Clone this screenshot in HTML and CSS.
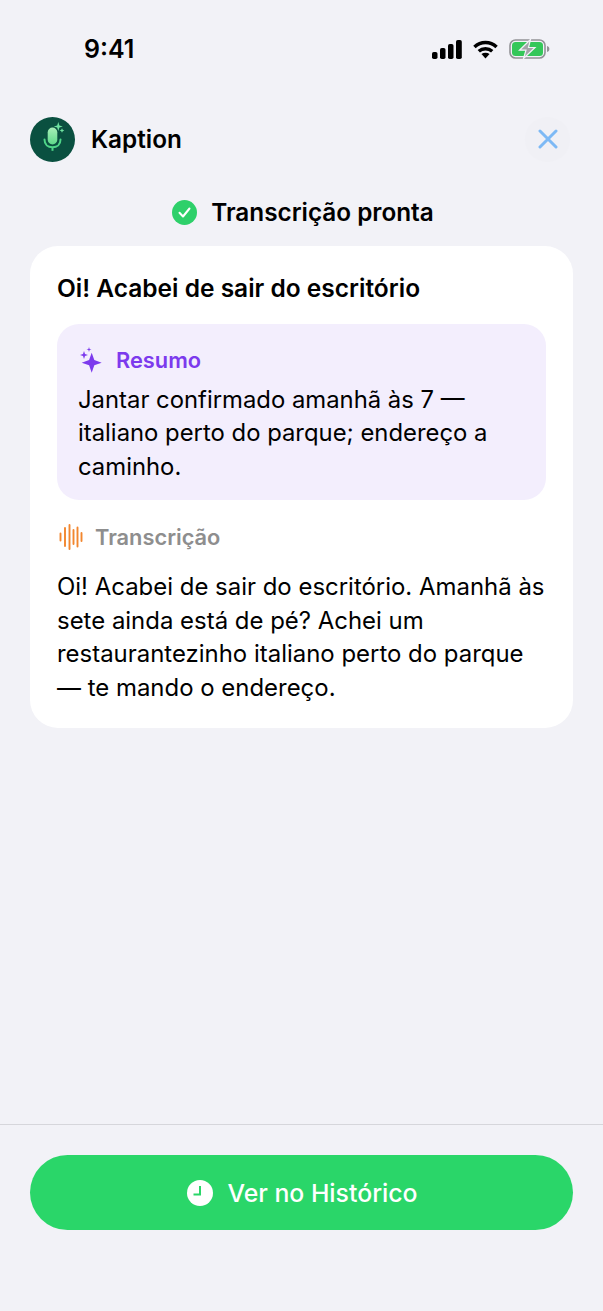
FILE: index.html

```html
<!DOCTYPE html>
<html lang="pt">
<head>
  <meta charset="UTF-8" />
  <meta name="viewport" content="width=device-width, initial-scale=1.0"/>
  <title>Kaption</title>
  <link rel="stylesheet" href="styles.css">
</head>
<body>
  <div class="page">

    <div class="status-bar">
      <span class="time">9:41</span>
      <div class="status-icons">
        <svg width="30" height="19" viewBox="0 0 30 19"><rect x="0" y="12" width="5.500" height="7" rx="1.800"/><rect x="8" y="8" width="5.500" height="11" rx="1.800"/><rect x="16" y="4" width="5.500" height="15" rx="1.800"/><rect x="24" y="0" width="5.800" height="19" rx="1.800"/></svg>
        <svg class="wifi" width="25" height="19" viewBox="0 0 26 19" fill="none" stroke="#000" stroke-width="3.600"><path d="M1.500 6.800C8 .6 18 .6 24.500 6.800"/><path d="M6 11.400c4-3.600 10-3.600 14 0"/><path d="M13 18.800l-4.200-4.600c2.500-1.900 5.900-1.900 8.400 0z" fill="#000" stroke="none"/></svg>
        <svg class="battery" width="41" height="20" viewBox="0 0 41 20">
          <rect x="1" y="1" width="35" height="18" rx="5.500" fill="none" stroke="#929296" stroke-width="1.600"/>
          <rect x="3" y="3" width="31" height="14" rx="3.500" fill="#34c759"/>
          <path d="M38 7c1.600.4 2.400 1.500 2.400 3s-.8 2.600-2.400 3z" fill="#929296"/>
          <path d="M21.500.5L10.500 11.200h6.500L14.500 19.500l11.500-11h-6.500z" fill="#a3a3a8" stroke="#f2f2f7" stroke-width="1.200"/>
        </svg>
      </div>
    </div>

    <header class="top">
      <div class="brand">
        <svg class="logo" width="45" height="45" viewBox="0 0 45 45">
          <defs>
            <linearGradient id="micfill" x1="0" y1="0" x2="0" y2="1"><stop offset="0" stop-color="#a8efb8"/><stop offset="1" stop-color="#5fd98a"/></linearGradient>
          </defs>
          <circle cx="22.500" cy="22.500" r="22.500" fill="#0a5040"/>
          <rect x="17.700" y="10.500" width="9.600" height="17" rx="4.800" fill="url(#micfill)"/>
          <path d="M14.500 22.500c0 4.900 3.400 7.800 8 7.800s8-2.900 8-7.800" fill="none" stroke="#4fd688" stroke-width="2" stroke-linecap="round"/>
          <rect x="21.500" y="30" width="2" height="3.800" fill="#4fd688"/>
          <path d="M28.300 5l1.100 3.400 3.400 1.100-3.400 1.100-1.100 3.400-1.100-3.400-3.400-1.100 3.400-1.100z" fill="#6fe3a0"/>
          <path d="M32 11.200l.7 1.600 1.600.7-1.600.7-.7 1.600-.7-1.600-1.600-.7 1.600-.7z" fill="#6fe3a0"/>
        </svg>
        <span class="brand-name">Kaption</span>
      </div>
      <button class="close">
        <svg width="20" height="20" viewBox="0 0 20 20" fill="none" stroke="#7db9f5" stroke-width="3" stroke-linecap="round"><path d="M2 2l16 16M18 2L2 18"/></svg>
      </button>
    </header>

    <div class="done">
      <svg width="25" height="25" viewBox="0 0 25 25"><circle cx="12.500" cy="12.500" r="12.500" fill="#2ed06a"/><path d="M7.500 12.800l3.500 3.700 6.500-8" fill="none" stroke="#fff" stroke-width="2" stroke-linecap="round" stroke-linejoin="round"/></svg>
      <span>Transcrição pronta</span>
    </div>

    <section class="card">
      <h2 class="card-title">Oi! Acabei de sair do escritório</h2>

      <div class="summary">
        <div class="label label-purple">
          <svg width="24" height="26" viewBox="0 0 24 26" fill="#7c3aed"><path d="M12.700 5.700l2.600 7.400 7.400 2.600-7.400 2.600-2.600 7.400-2.600-7.400-7.400-2.600 7.400-2.600z"/><path d="M5 4l1 3 3 1-3 1-1 3-1-3-3-1 3-1z"/><path d="M10 0l.6 1.900 1.900.6-1.900.6-.6 1.900-.6-1.900-1.900-.6 1.900-.6z"/></svg>
          <span>Resumo</span>
        </div>
        <p class="text">Jantar confirmado amanhã às 7 — italiano perto do parque; endereço a caminho.</p>
      </div>

      <div class="label label-gray">
        <svg width="24" height="26" viewBox="0 0 24 26" fill="none" stroke="#f2862e" stroke-width="1.900" stroke-linecap="round"><path d="M1.500 9.500v7M6 4v18M10.500 1v24M14.500 6v14M18.500 3.500v19M22.500 9v8"/></svg>
        <span>Transcrição</span>
      </div>
      <p class="text">Oi! Acabei de sair do escritório. Amanhã às sete ainda está de pé? Achei um restaurantezinho italiano perto do parque — te mando o endereço.</p>
    </section>

    <footer class="bottom">
      <button class="history">
        <svg width="26" height="26" viewBox="0 0 26 26"><circle cx="13" cy="13" r="13" fill="#fff"/><path d="M13 6v8.500H6.500" fill="none" stroke="#2ad669" stroke-width="2"/></svg>
        <span>Ver no Histórico</span>
      </button>
    </footer>

  </div>
</body>
</html>
```

FILE: styles.css

```css
* {
  box-sizing: border-box;
}
body {
  font-family: 'Inter', sans-serif;
  background-color: #f2f2f7;
  color: #000;
  margin: 0;
}
.page {
  height: 1311px;
  display: flex;
  flex-direction: column;
}
.status-bar {
  height: 98px;
  padding: 0 53px 0 84px;
  display: flex;
  justify-content: space-between;
  align-items: center;
}
.time {
  font-size: 25px;
  font-weight: 600;
}
.status-icons {
  display: flex;
  align-items: center;
  gap: 11px;
}
.top {
  height: 82px;
  padding: 0 33px 0 30px;
  display: flex;
  justify-content: space-between;
  align-items: center;
}
.brand {
  display: flex;
  align-items: center;
  gap: 16px;
}
.brand-name {
  font-size: 24.300px;
  font-weight: 600;
}
.close {
  width: 45px;
  height: 45px;
  border: 0;
  border-radius: 50%;
  background-color: #f0f0f5;
  padding: 0;
  display: flex;
  align-items: center;
  justify-content: center;
}
.done {
  display: flex;
  justify-content: center;
  align-items: center;
  gap: 14px;
  height: 66px;
  padding: 0 0 2px 3px;
  font-size: 24.300px;
  font-weight: 600;
}
.card {
  margin: 0 30px;
  height: 482px;
  padding: 24px 27px;
  background-color: #fff;
  border-radius: 28px;
}
.card-title {
  margin: 0 0 18px;
  font-size: 24.500px;
  line-height: 36px;
  font-weight: 600;
}
.summary {
  height: 176px;
  padding: 19px 21px;
  background-color: #f3eefd;
  border-radius: 22px;
  margin-bottom: 20px;
}
.label {
  display: flex;
  align-items: center;
  gap: 13px;
  font-size: 21.800px;
  font-weight: 600;
  height: 33px;
}
.label-purple {
  color: #7c3aed;
  margin-bottom: 6.500px;
  padding-left: 1px;
}
.label-gray {
  color: #8e8e8e;
  gap: 12px;
  margin-bottom: 17px;
  padding-left: 2px;
}
.text {
  margin: 0;
  font-size: 23.950px;
  line-height: 33.500px;
}
.summary .text {
  font-size: 23.850px;
}
.bottom {
  margin-top: auto;
  height: 187px;
  padding: 30px 30px 0;
  border-top: 1px solid #d6d6db;
}
.history {
  width: 100%;
  height: 75px;
  border: 0;
  border-radius: 38px;
  background-color: #2ad669;
  color: #fff;
  font-family: 'Inter', sans-serif;
  font-size: 24.800px;
  font-weight: 500;
  padding: 0 0 0 2px;
  display: flex;
  align-items: center;
  justify-content: center;
  gap: 14px;
}
```
